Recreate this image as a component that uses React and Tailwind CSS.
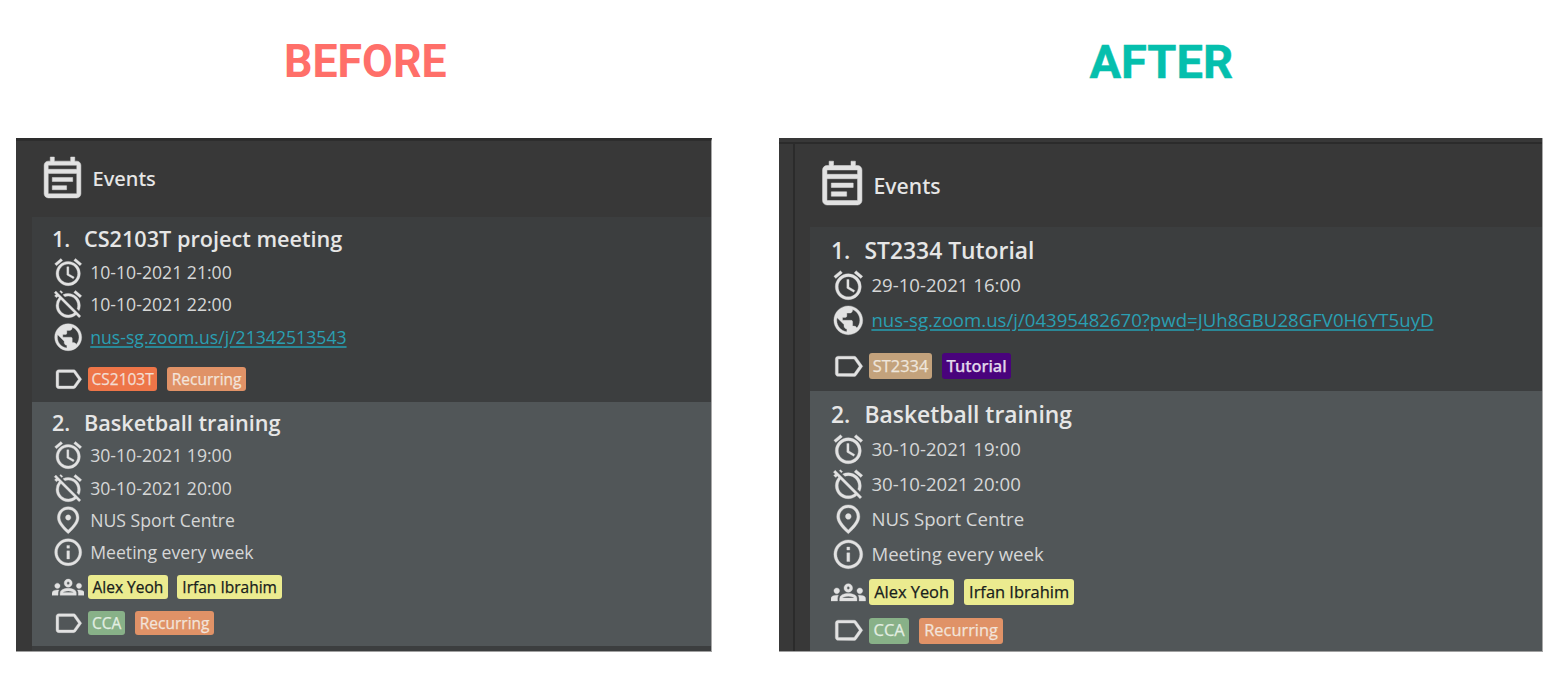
import {
  MdAlarm,
  MdAlarmOff,
  MdOutlineEventNote,
  MdOutlineGroups,
  MdOutlineInfo,
  MdOutlineLabel,
  MdOutlinePlace,
  MdPublic,
} from "react-icons/md";

const icons = {
  start: MdAlarm,
  end: MdAlarmOff,
  link: MdPublic,
  place: MdOutlinePlace,
  info: MdOutlineInfo,
};

const small = {
  itemPad: "pl-[20px]",
  title: "h-[30px] text-[21.65px]",
  number: "w-[32px]",
  row: "h-[32.4px] gap-[5.8px] text-[17.65px]",
  icon: "size-[32.4px]",
  tagRow: "gap-[3.5px]",
  tags: "gap-[9.5px]",
  tag: "h-[24px] text-[15.5px] rounded-[3px]",
};

const large = {
  itemPad: "pl-[21px]",
  title: "h-[32px] text-[22.85px]",
  number: "w-[33.5px]",
  row: "h-[35.1px] gap-[5.8px] text-[18.62px]",
  icon: "size-[34.6px]",
  tagRow: "gap-[3.5px]",
  tags: "gap-[10px]",
  tag: "h-[26px] text-[16.4px] rounded-[3px]",
};

// The thin stroke thickens the glyph; the icons' transparent bounding path stays unstroked.
const iconStyle = "shrink-0 stroke-[#dcdcdc] [stroke-width:0.25] text-[#e2e2e2] [&_[fill=none]]:stroke-none";

function Title({ s, number, children }) {
  return (
    <div className={`flex items-center whitespace-nowrap font-semibold text-[#e6e6e6] ${s.title}`}>
      <span className={`shrink-0 ${s.number}`}>{number}</span>
      <span>{children}</span>
    </div>
  );
}

function Row({ s, type, children }) {
  const Icon = icons[type];
  return (
    <div className={`flex items-center whitespace-nowrap ${s.row}`}>
      <Icon className={`${iconStyle} ${s.icon}`} />
      {type === "link" ? (
        <a className="text-[#2a9fb2] underline decoration-[#2a8796] decoration-2 underline-offset-2">{children}</a>
      ) : (
        <span className="text-[#d6d7d7]">{children}</span>
      )}
    </div>
  );
}

function Tags({ s, icon: Icon, className, tags }) {
  return (
    <div className={`flex items-center ${s.tagRow} ${className}`}>
      <Icon className={`${iconStyle} ${s.icon}`} />
      <div className={`flex ${s.tags}`}>
        {tags.map(([label, style]) => (
          <span key={label} className={`flex items-center justify-center whitespace-nowrap [-webkit-text-stroke:0.25px_currentColor] ${s.tag} ${style}`}>
            {label}
          </span>
        ))}
      </div>
    </div>
  );
}

function Before() {
  return (
    <section className="ml-4 w-[695.5px]">
      <h1 className="flex h-[138px] items-start justify-center pt-[33px] pl-[2px] font-[Roboto] text-[47px] leading-[56px] font-bold text-[#ff6f69]">
        <span className="w-[162px] origin-left scale-x-[0.95] whitespace-nowrap">BEFORE</span>
      </h1>
      <div className="flex h-[513.5px] flex-col overflow-hidden border-t-[3px] border-r border-b border-t-[#2d2d2d] border-r-[#a8a8a8] border-b-[#a0a0a0] bg-[#383838] pl-4">
        <div className="flex h-[76px] shrink-0 items-center pl-[6px] font-['Noto_Sans'] text-[20.1px] font-medium text-[#e6e6e6]">
          <MdOutlineEventNote className={`size-[49px] ${iconStyle}`} />
          <span className="pl-[5.5px]">Events</span>
        </div>
        <div className={`h-[185px] shrink-0 bg-[#3c3e3f] pt-[7px] ${small.itemPad}`}>
          <Title s={small} number="1.">CS2103T project meeting</Title>
          <div className="pt-[2px]">
            <Row s={small} type="start">10-10-2021 21:00</Row>
            <Row s={small} type="end">10-10-2021 22:00</Row>
            <Row s={small} type="link">nus-sg.zoom.us/j/21342513543</Row>
          </div>
          <Tags
            s={small}
            icon={MdOutlineLabel}
            className="mt-[10px]"
            tags={[
              ["CS2103T", "w-[69.5px] bg-[#ee7548] text-[#f3ddd2]"],
              ["Recurring", "w-[79.5px] bg-[#e09267] text-[#f3e4da]"],
            ]}
          />
        </div>
        <div className={`h-[244px] shrink-0 bg-[#515658] pt-[6px] ${small.itemPad}`}>
          <Title s={small} number="2.">Basketball training</Title>
          <div className="pt-[1.3px]">
            <Row s={small} type="start">30-10-2021 19:00</Row>
            <Row s={small} type="end">30-10-2021 20:00</Row>
            <Row s={small} type="place">NUS Sport Centre</Row>
            <Row s={small} type="info">Meeting every week</Row>
          </div>
          <Tags
            s={small}
            icon={MdOutlineGroups}
            className="mt-[2.2px]"
            tags={[
              ["Alex Yeoh", "w-[80px] bg-[#ebeb8f] text-[#17201c]"],
              ["Irfan Ibrahim", "w-[104.5px] bg-[#ebeb8f] text-[#17201c]"],
            ]}
          />
          <Tags
            s={small}
            icon={MdOutlineLabel}
            className="mt-[3.5px]"
            tags={[
              ["CCA", "w-[37.5px] bg-[#88b188] text-[#e3eee3]"],
              ["Recurring", "w-[79.5px] bg-[#e09267] text-[#f3e4da]"],
            ]}
          />
        </div>
        <div className="h-[6px] shrink-0 bg-[#3c3e3f]" />
      </div>
    </section>
  );
}

function After() {
  return (
    <section className="ml-[67.5px] w-[763.5px]">
      <h1 className="flex h-[138px] items-start justify-center pt-[33.5px] pl-px font-[Roboto] text-[47px] leading-[56px] font-bold text-[#05bfad] [-webkit-text-stroke:0.5px_currentColor]">
        AFTER
      </h1>
      <div className="flex h-[513.5px] flex-col overflow-hidden border-r border-b border-r-[#a8a8a8] border-b-[#a0a0a0] bg-[#383838]">
        <div className="h-[6px] shrink-0 border-b-2 border-b-[#2b2b2b]" />
        <div className="flex">
          <div className="w-[16px] shrink-0 border-r-2 border-r-[#2b2b2b]" />
          <div className="grow pl-[15px]">
            <div className="flex h-[83px] items-center pl-[6px] font-['Noto_Sans'] text-[21.3px] font-medium text-[#e6e6e6]">
              <MdOutlineEventNote className={`size-[52.5px] ${iconStyle}`} />
              <span className="pl-[5px]">Events</span>
            </div>
            <div className={`h-[164px] bg-[#3c3e3f] pt-[8px] ${large.itemPad}`}>
              <Title s={large} number="1.">ST2334 Tutorial</Title>
              <div className="pt-[0.5px]">
                <Row s={large} type="start">29-10-2021 16:00</Row>
                <Row s={large} type="link">nus-sg.zoom.us/j/04395482670?pwd=JUh8GBU28GFV0H6YT5uyD</Row>
              </div>
              <Tags
                s={large}
                icon={MdOutlineLabel}
                className="mt-[11.5px]"
                tags={[
                  ["ST2334", "w-[63px] bg-[#c3a27c] text-[#efe6dc]"],
                  ["Tutorial", "w-[69px] bg-[#49037c] text-[#e2d8ea] font-['Noto_Sans'] font-medium"],
                ]}
              />
            </div>
            <div className={`h-[262px] bg-[#515658] pt-[8px] ${large.itemPad}`}>
              <Title s={large} number="2.">Basketball training</Title>
              <div className="pt-[0.5px]">
                <Row s={large} type="start">30-10-2021 19:00</Row>
                <Row s={large} type="end">30-10-2021 20:00</Row>
                <Row s={large} type="place">NUS Sport Centre</Row>
                <Row s={large} type="info">Meeting every week</Row>
              </div>
              <Tags
                s={large}
                icon={MdOutlineGroups}
                className="mt-[3px]"
                tags={[
                  ["Alex Yeoh", "w-[85px] bg-[#ebeb8f] text-[#17201c]"],
                  ["Irfan Ibrahim", "w-[110px] bg-[#ebeb8f] text-[#17201c]"],
                ]}
              />
              <Tags
                s={large}
                icon={MdOutlineLabel}
                className="mt-[4px]"
                tags={[
                  ["CCA", "w-[40px] bg-[#88b188] text-[#e3eee3]"],
                  ["Recurring", "w-[84px] bg-[#e09267] text-[#f3e4da]"],
                ]}
              />
            </div>
          </div>
        </div>
      </div>
    </section>
  );
}

export default function App() {
  return (
    <main className="flex h-[688px] w-[1564px] overflow-hidden bg-white font-['Open_Sans','Noto_Sans',sans-serif]">
      <Before />
      <After />
    </main>
  );
}
